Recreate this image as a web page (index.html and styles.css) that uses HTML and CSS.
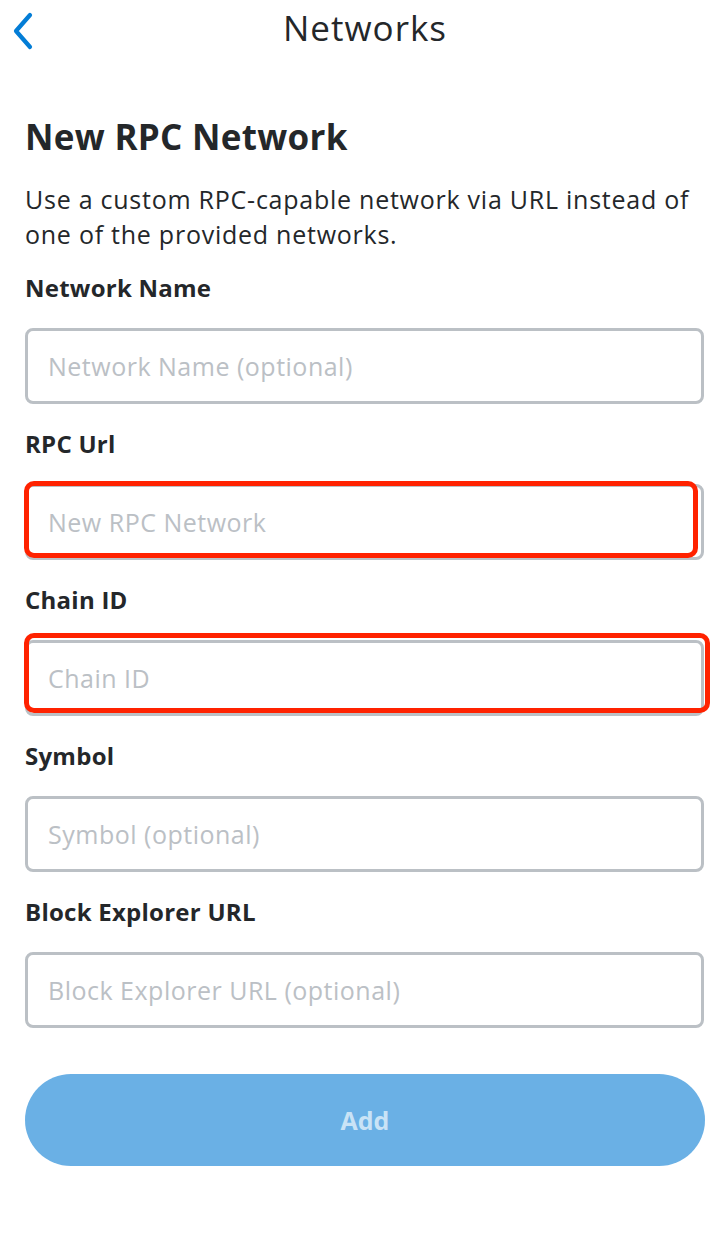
FILE: index.html
```html
<!DOCTYPE html>
<html lang="en">
<head>
<meta charset="utf-8">
<title>Networks</title>
<link rel="stylesheet" href="styles.css">
</head>
<body>
<div class="screen">
  <header class="topbar">
    <span class="back" aria-label="Back">
      <svg width="24" height="38" viewBox="0 0 24 38"><path d="M19 3 L5 19 L19 35" fill="none" stroke="#037dd6" stroke-width="4.2" stroke-linecap="round" stroke-linejoin="round"/></svg>
    </span>
    <h2 class="topbar-title">Networks</h2>
  </header>
  <main class="content">
    <h1 class="title">New RPC Network</h1>
    <p class="desc">Use a custom RPC-capable network via URL instead of one of the provided networks.</p>
    <div class="fields">
      <div class="field">
        <label class="label">Network Name</label>
        <div class="input-wrap"><div class="input"><span class="ph">Network Name (optional)</span></div></div>
      </div>
      <div class="field">
        <label class="label">RPC Url</label>
        <div class="input-wrap"><div class="input"><span class="ph">New RPC Network</span></div><span class="mark mark-rpc"></span></div>
      </div>
      <div class="field">
        <label class="label">Chain ID</label>
        <div class="input-wrap"><div class="input"><span class="ph">Chain ID</span></div><span class="mark mark-chain"></span></div>
      </div>
      <div class="field">
        <label class="label">Symbol</label>
        <div class="input-wrap"><div class="input"><span class="ph">Symbol (optional)</span></div></div>
      </div>
      <div class="field">
        <label class="label">Block Explorer URL</label>
        <div class="input-wrap"><div class="input"><span class="ph">Block Explorer URL (optional)</span></div></div>
      </div>
    </div>
    <button class="add-btn" type="button">Add</button>
  </main>
</div>
</body>
</html>
```
FILE: styles.css
```css
* { box-sizing: border-box; }
html, body { margin: 0; padding: 0; background: #fff; }
body {
  font-family: "Open Sans", "Lato", "Liberation Sans", sans-serif;
  color: #24272a;
  width: 724px;
  height: 1238px;
  overflow: hidden;
}
.topbar {
  position: relative;
  height: 56px;
  display: flex;
  align-items: center;
  justify-content: center;
}
.back {
  position: absolute;
  left: 11px;
  top: 12px;
  width: 24px;
  height: 38px;
  display: block;
}
.back svg { display: block; }
.topbar-title {
  margin: 0;
  font-weight: 400;
  font-size: 35px;
  letter-spacing: 1px;
  line-height: 56px;
  color: #24272a;
  padding-left: 6px;
}
.content {
  padding: 59px 20px 0 25px;
  display: flex;
  flex-direction: column;
}
.title {
  margin: 0;
  font-size: 35px;
  line-height: 44px;
  font-weight: 700;
  color: #24272a;
  letter-spacing: 0.3px;
}
.desc {
  margin: 23px 0 0;
  font-size: 25px;
  letter-spacing: 0.75px;
  line-height: 35px;
  color: #24272a;
}
.fields {
  margin-top: 20px;
  display: flex;
  flex-direction: column;
  gap: 24px;
}
.field {
  display: flex;
  flex-direction: column;
}
.label {
  font-size: 24px;
  letter-spacing: 0.25px;
  line-height: 32px;
  font-weight: 700;
  color: #24272a;
  margin-bottom: 24px;
}
.input-wrap { position: relative; }
.input {
  height: 76px;
  border: 3px solid #bbc0c5;
  border-radius: 8px;
  display: flex;
  align-items: center;
  padding-left: 20px;
}
.ph {
  font-size: 25px;
  letter-spacing: 0.5px;
  color: #bbc0c5;
}
.mark {
  position: absolute;
  border: 5px solid #ff2200;
  border-radius: 10px;
}
.mark-rpc { left: -1px; top: -3px; right: 6px; bottom: 2px; }
.mark-chain { left: -1px; top: -7px; right: -6px; bottom: 3px; }
.add-btn {
  margin-top: 46px;
  height: 92px;
  width: 680px;
  border: none;
  border-radius: 46px;
  background: #6ab0e5;
  color: #c9e3f6;
  font-family: "Open Sans", "Lato", "Liberation Sans", sans-serif;
  font-size: 25px;
  font-weight: 700;
}
```
